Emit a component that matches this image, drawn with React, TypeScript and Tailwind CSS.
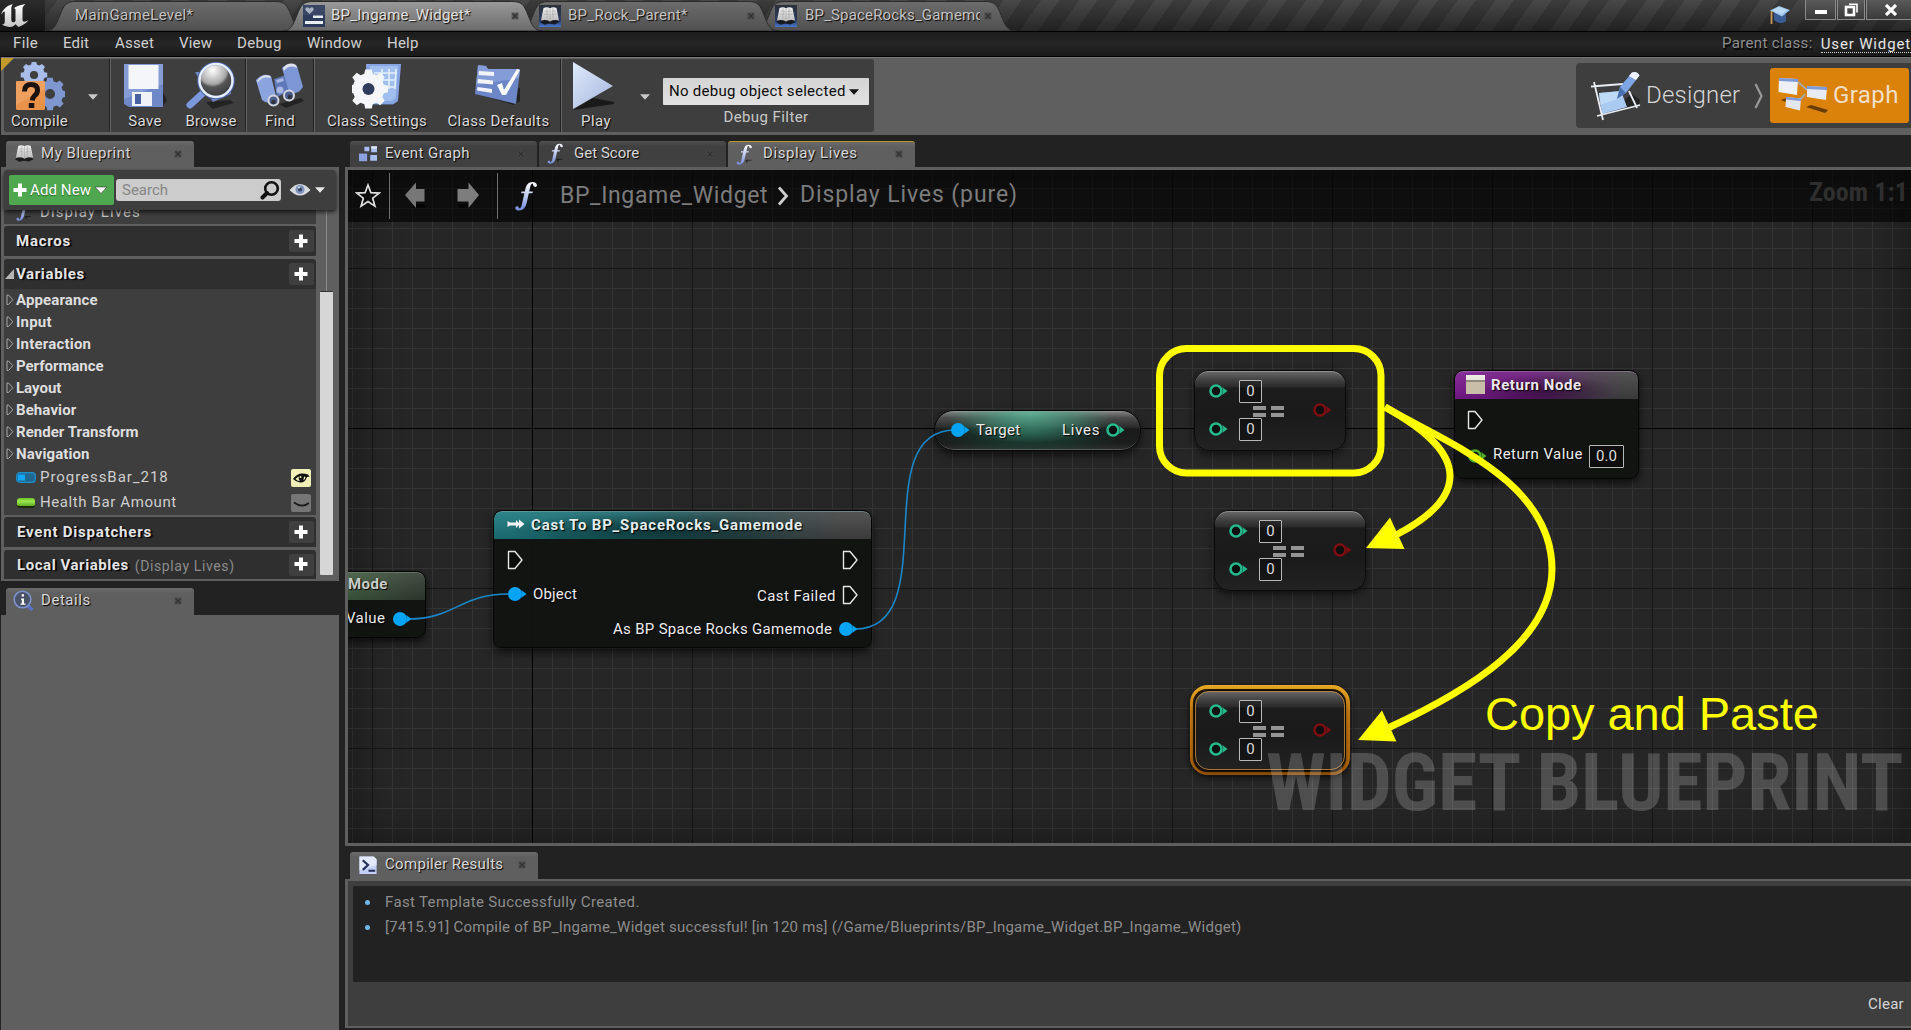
import React from "react";

type Kids = { children?: React.ReactNode };

const SHADOW = "[text-shadow:1px_1px_1px_#000]";

/* ---------- small shared icons ---------- */

function Close({ className = "" }: { className?: string }) {
  return (
    <svg viewBox="0 0 8 8" className={`h-2 w-2 ${className}`}>
      <rect x="0.5" y="0.5" width="7" height="7" fill="#484848" opacity="0.7" />
      <path d="M1.5 1.5l5 5M6.5 1.5l-5 5" stroke="#2e2e2e" strokeWidth="1.2" opacity="0.9" />
    </svg>
  );
}

function Caret({ color = "#c9c9c9", className = "" }: { color?: string; className?: string }) {
  return (
    <svg viewBox="0 0 10 6" className={`h-1.5 w-2.5 ${className}`}>
      <path d="M0 0.3h10L5 5.7z" fill={color} />
    </svg>
  );
}

function Plus({ className = "" }: { className?: string }) {
  return (
    <svg viewBox="0 0 14 14" className={className}>
      <path d="M5 0.5h4V5h4.5v4H9v4.5H5V9H0.500V5H5z" fill="#fff" />
    </svg>
  );
}

function FnIcon({ className = "" }: { className?: string }) {
  return (
    <svg viewBox="0 0 24 30" className={className}>
      <defs>
        <linearGradient id="fn" x1="0" y1="0" x2="0" y2="1">
          <stop offset="0" stopColor="#ffffff" />
          <stop offset="0.45" stopColor="#c3cef2" />
          <stop offset="1" stopColor="#7088da" />
        </linearGradient>
      </defs>
      <path d="M13 22.500h9v1.500h-5l-2 4z" fill="#0d0d0d" opacity="0.6" />
      <path
        d="M22.500 4.500C22.500 2.300 20.500 1 18 1C14 1 11.800 3.800 10.800 8.300L10.300 10.500H7L6.600 12.300H9.900L7.600 22.500C7 25.300 6.300 27.300 4.800 27.300C4.300 27.300 4.500 26.300 3.500 25.500C2.300 24.700 0.600 25.500 0.800 27.200C1 28.700 2.500 29.500 4.300 29.500C8.800 29.500 11.300 26 12.400 21L14.300 12.300H18L18.400 10.500H14.700L15.700 6C16.200 3.800 16.900 2.600 18 2.600C18.800 2.600 18.400 3.600 18.800 4.600C19.500 6.500 22.500 6.300 22.500 4.500z"
        fill="url(#fn)"
      />
    </svg>
  );
}

function Book({ framed = false, className = "" }: { framed?: boolean; className?: string }) {
  return (
    <svg viewBox="0 0 22 22" className={className}>
      <defs>
        <linearGradient id="bkframe" x1="0" y1="0" x2="0" y2="1">
          <stop offset="0" stopColor="#2b3039" />
          <stop offset="0.7" stopColor="#2a3c63" />
          <stop offset="1" stopColor="#4a78d0" />
        </linearGradient>
        <linearGradient id="bkpage" x1="0" y1="0" x2="0" y2="1">
          <stop offset="0" stopColor="#f2f2f2" />
          <stop offset="1" stopColor="#b9b9b9" />
        </linearGradient>
      </defs>
      {framed && <rect width="22" height="22" fill="url(#bkframe)" />}
      <path d="M1 17l3-2h14l2.500 2-5 2.500-5-1-5 1.200z" fill="#111" opacity="0.85" />
      <path d="M4.500 3Q8 1.500 11 3.200Q14 1.500 17.500 3L20 15.500Q15 14.200 11 16.500Q7 14.200 2 15.500z" fill="url(#bkpage)" />
      <path d="M11 3.200V16.500M5.500 6.500q3-1 4.500 0M5 9.500q3-1 5 0M12.500 6.500q2-1 4.500 0M12.500 9.500q3-1 5 0M8 3v10M14 3v10" stroke="#9a9a9a" strokeWidth="0.500" fill="none" />
    </svg>
  );
}

const GEAR =
  "M-2.200 -10h4.400l.6 2.800 2.500 1 2.500-1.600 3 3-1.600 2.500 1 2.500 2.800.6v4.400l-2.800.6-1 2.500 1.600 2.500-3 3-2.500-1.600-2.500 1-.6 2.800h-4.400l-.6-2.800-2.500-1-2.500 1.600-3-3 1.600-2.500-1-2.500-2.800-.6v-4.400l2.800-.6 1-2.500-1.600-2.500 3-3 2.500 1.600 2.500-1z";

function Gear({ x, y, s, fill, hole }: { x: number; y: number; s: number; fill: string; hole: string }) {
  return (
    <g transform={`translate(${x} ${y}) scale(${s})`}>
      <path transform="translate(0 -3)" d={GEAR} fill={fill} />
      <circle r="4" fill={hole} />
    </g>
  );
}

/* ---------- title bar ---------- */

function UnrealLogo() {
  return (
    <svg viewBox="0 0 30 30" className="h-[30px] w-[30px]">
      <defs>
        <linearGradient id="ulogo" x1="0" y1="0" x2="0" y2="1">
          <stop offset="0" stopColor="#ffffff" />
          <stop offset="1" stopColor="#c4c4c4" />
        </linearGradient>
      </defs>
      <path
        d="M1 14.500C3 9 7 5.500 13 4.300C11.500 5.700 11.300 7 11.300 9V19.500C11.300 21.500 12.300 22.300 13.300 22.300C14.300 22.300 15 21.800 15.500 20.800V10C15.500 8.800 15 8.300 14 8.200C16 6.300 18.500 5.600 25.500 4C23 6 22.500 7.300 22.500 9.500V19.500C22.500 21.800 24 22.500 28.500 20.300C26 23.500 22.500 25.800 18.500 27L15.500 24.200C13.500 26.500 11.500 27 9.300 26.900C5.800 26.600 4.200 25.800 2 24.500C4.300 24.500 4.800 23.200 4.800 21V12.500C4.800 10.500 3.800 11.200 1 14.500z"
        fill="url(#ulogo)"
      />
    </svg>
  );
}

function TabShape({ w, active }: { w: number; active?: boolean }) {
  const d = `M0 31C9 31 11 25 15 15C19 5 21 1.500 31 1.500H${w - 31}C${w - 21} 1.500 ${w - 19} 5 ${w - 15} 15C${w - 11} 25 ${w - 9} 31 ${w} 31z`;
  return (
    <svg viewBox={`0 0 ${w} 31`} preserveAspectRatio="none" className="absolute inset-0 h-full w-full">
      <defs>
        <linearGradient id="tabOn" x1="0" y1="0" x2="0" y2="1">
          <stop offset="0" stopColor="#9a9a9a" />
          <stop offset="1" stopColor="#6b6b6b" />
        </linearGradient>
        <linearGradient id="tabOff" x1="0" y1="0" x2="0" y2="1">
          <stop offset="0" stopColor="#6c6c6c" />
          <stop offset="1" stopColor="#505050" />
        </linearGradient>
      </defs>
      <path d={d} fill={active ? "url(#tabOn)" : "url(#tabOff)"} stroke="#2b2b2b" strokeWidth="1" />
    </svg>
  );
}

function TitleBar() {
  return (
    <header className="flex h-[31px] shrink-0 justify-between bg-[linear-gradient(to_bottom,rgba(0,0,0,0)_0%,rgba(0,0,0,0.45)_100%),repeating-linear-gradient(125deg,#3c3c3c_0px,#3c3c3c_16px,#484848_16px,#484848_31px)]">
      <div className="flex">
        <div className="w-[45px] bg-[linear-gradient(to_bottom,#2c2c2c,#151515)]">
          <UnrealLogo />
        </div>
        <div className="relative w-[261px] pl-[30px]">
          <TabShape w={261} />
          <span className={`relative text-[15px] leading-[31px] tracking-[0.32px] text-[#c4c4c4] ${SHADOW}`}>MainGameLevel*</span>
        </div>
        <div className="relative z-10 -ml-[24px] flex w-[261px] items-center pl-[21px]">
          <TabShape w={261} active />
          <svg viewBox="0 0 22 22" className="relative h-[22px] w-[22px]">
            <rect width="22" height="22" fill="#2c3a5c" />
            <rect width="22" height="10" fill="#3a4764" />
            <path d="M6.500 9L2.500 5.200Q2 2.500 4.300 2.300Q6 2.300 6.500 3.800Q7.200 2.300 8.800 2.300Q11 2.600 10.500 5.200z" fill="#a9b3c4" />
            <path d="M10 10.500h10v2.500H10zM2 16h18v3H2z" fill="#e8ecf5" />
          </svg>
          <span className={`relative ml-[6px] w-[180px] text-[15px] leading-[31px] tracking-[0.24px] text-[#e2e2e2] ${SHADOW}`}>BP_Ingame_Widget*</span>
          <Close className="relative" />
        </div>
        <div className="relative z-[5] -ml-[25px] flex w-[261px] items-center pl-[21px]">
          <TabShape w={261} />
          <Book framed className="relative h-[22px] w-[22px]" />
          <span className={`relative ml-[7px] w-[179px] text-[15px] leading-[31px] tracking-[0.27px] text-[#c4c4c4] ${SHADOW}`}>BP_Rock_Parent*</span>
          <Close className="relative" />
        </div>
        <div className="relative -ml-[25px] flex w-[262px] items-center pl-[21px]">
          <TabShape w={262} />
          <Book framed className="relative h-[22px] w-[22px]" />
          <span className={`relative ml-[8px] w-[175px] overflow-hidden whitespace-nowrap text-[15px] leading-[31px] tracking-[0.16px] text-[#c4c4c4] ${SHADOW}`}>BP_SpaceRocks_Gamemode</span>
          <Close className="relative ml-[4px]" />
        </div>
      </div>
      <div className="flex">
        <svg viewBox="0 0 22 22" className="mr-[14px] mt-1 h-[22px] w-[22px]">
          <path d="M5 9v7q6 6 12 1v-7z" fill="#3a5c92" />
          <path d="M1 6.500L10 2l11 4-8 6.500z" fill="#9cc3ea" />
          <path d="M3 6.500L10 3l8 3-5.500 4.500z" fill="#bcd9f5" />
          <path d="M2.500 7v13" stroke="#c59a5c" strokeWidth="1.800" />
        </svg>
        <div className="flex h-5 w-[31px] items-center justify-center border border-t-0 border-[#8b8b8b] bg-[linear-gradient(to_bottom,#5a5a5a,#3a3a3a)]">
          <div className="mt-1 h-1 w-3 bg-white" />
        </div>
        <div className="ml-px flex h-5 w-[28px] items-center justify-center border border-t-0 border-[#8b8b8b] bg-[linear-gradient(to_bottom,#5a5a5a,#3a3a3a)]">
          <svg viewBox="0 0 14 14" className="h-3.5 w-3.5">
            <path d="M5 1.200h8v8.300" fill="none" stroke="#fff" strokeWidth="1.600" />
            <rect x="2" y="4" width="8" height="8" fill="none" stroke="#fff" strokeWidth="2.600" />
          </svg>
        </div>
        <div className="ml-px flex h-5 w-[45px] items-center justify-center border border-r-0 border-t-0 border-[#8b8b8b] bg-[linear-gradient(to_bottom,#5a5a5a,#3a3a3a)]">
          <svg viewBox="0 0 12 12" className="ml-1 h-3 w-3">
            <path d="M1 1l10 10M11 1L1 11" stroke="#fff" strokeWidth="3.200" />
          </svg>
        </div>
      </div>
    </header>
  );
}

function MenuBar() {
  const item = "text-[15px] leading-[22px] text-[#d0d0d0]";
  return (
    <nav className="relative flex h-[26px] shrink-0 items-start border-y border-black bg-[linear-gradient(to_bottom,#1c1c1c,#262626_50%,#191919)] pl-[13px]">
      <span className={`w-[50px] tracking-[0.4px] ${item}`}>File</span>
      <span className={`w-[52px] tracking-[0.2px] ${item}`}>Edit</span>
      <span className={`w-[64px] tracking-[0.19px] ${item}`}>Asset</span>
      <span className={`w-[58px] tracking-[0.2px] ${item}`}>View</span>
      <span className={`w-[70px] tracking-[0.38px] ${item}`}>Debug</span>
      <span className={`w-[80px] tracking-[0.25px] ${item}`}>Window</span>
      <span className={`tracking-[0.23px] ${item}`}>Help</span>
      <div className="ml-auto flex whitespace-nowrap">
        <span className="mr-[8px] text-[15px] leading-[22px] tracking-[0.36px] text-[#8f8f8f] [text-shadow:1px_2px_1px_#000]">Parent class:</span>
        <span className="mt-0.5 h-[19px] border-b border-dotted border-[#cfcfcf] text-[15px] leading-[20px] tracking-[0.85px] text-[#e4e4e4]">User Widget</span>
      </div>
    </nav>
  );
}

/* ---------- toolbar ---------- */

function Sep() {
  return <div className="mx-px h-full w-[2px] border-l border-[#222] bg-[#636363]" />;
}

function Tool({ children, label, className = "" }: Kids & { label: string; className?: string }) {
  return (
    <div className={`flex flex-col items-center pt-[3px] ${className}`}>
      <div className="h-[50px]">{children}</div>
      <span className={`whitespace-nowrap text-[15px] leading-[18px] text-[#dadada] ${SHADOW}`}>{label}</span>
    </div>
  );
}

const big = "h-[50px] w-[50px]";

function CompileIcon() {
  return (
    <svg viewBox="0 0 50 50" className={big}>
      <Gear x={19} y={13} s={1.02} fill="#a9bdea" hole="#3e3e3e" />
      <Gear x={35} y={32} s={1.25} fill="#7f97cf" hole="#3e3e3e" />
      <rect x="1" y="19" width="29" height="29" rx="1.500" fill="#e8924a" />
      <path d="M1 19h29v8L1 43z" fill="#f2aa6c" opacity="0.6" />
      <path d="M9.500 29.500Q9.500 22.500 16 22.500Q22.500 22.500 22.500 28.200Q22.500 31.500 19.500 33.800Q17.500 35.500 17.300 38.500" fill="none" stroke="#1c1310" strokeWidth="5" />
      <rect x="13.800" y="41" width="5.500" height="5" fill="#1c1310" />
    </svg>
  );
}

function SaveIcon() {
  return (
    <svg viewBox="0 0 50 50" className={big}>
      <path d="M8 44.500h34l5-6-4-8z" fill="#1c1c1c" opacity="0.8" />
      <path d="M4 2h39v43H9l-5-3z" fill="#6e88c8" />
      <path d="M4 2h39v20L4 37z" fill="#8ea5dc" opacity="0.7" />
      <rect x="8.500" y="3" width="30" height="24" fill="#f4f6fa" />
      <rect x="12" y="30" width="20" height="14" fill="#f0f2f8" />
      <rect x="15" y="32" width="6" height="10" fill="#48629f" />
    </svg>
  );
}

function BrowseIcon() {
  return (
    <svg viewBox="0 0 50 50" className={big}>
      <defs>
        <radialGradient id="lens" cx="0.4" cy="0.2" r="0.9">
          <stop offset="0" stopColor="#ffffff" />
          <stop offset="0.45" stopColor="#a8a8a8" />
          <stop offset="0.55" stopColor="#555" />
          <stop offset="1" stopColor="#333" />
        </radialGradient>
      </defs>
      <path d="M20 40l24-2 4 3-22 6z" fill="#1d1d1d" opacity="0.8" />
      <path d="M9 10l36 0v22l-18 8z" fill="#6f88c4" />
      <path d="M16 32L4 43" stroke="#7b98dc" strokeWidth="7" strokeLinecap="round" />
      <circle cx="30" cy="18.500" r="17" fill="url(#lens)" stroke="#4a64a4" strokeWidth="3.500" />
      <circle cx="30" cy="18.500" r="16.500" fill="none" stroke="#e6edfb" strokeWidth="2.500" />
    </svg>
  );
}

function FindIcon() {
  return (
    <svg viewBox="0 0 50 50" className={big}>
      <path d="M24 42l22-6 3 3-18 7z" fill="#1c1c1c" opacity="0.8" />
      <path d="M19 17l12-4 4 16-13 6z" fill="#6078b8" />
      <path d="M1 18Q8 10 16 14L22 38Q14 44 7 38z" fill="#8ba3de" />
      <path d="M2 19Q8 11 15 14l.5 2Q8 13 2.500 20.500z" fill="#e4e6ea" />
      <path d="M27 6Q34 -1 42 4L48 25Q42 34 34 30z" fill="#7d97d6" />
      <path d="M28 6Q34 -1 41 3l1 3Q34 2 29 9z" fill="#dfe2e8" />
      <circle cx="18.500" cy="38.500" r="5" fill="#4c5f91" stroke="#d4d7de" strokeWidth="2" />
      <circle cx="18.500" cy="40" r="2.300" fill="#30333d" />
      <circle cx="34" cy="33.500" r="5" fill="#4c5f91" stroke="#d4d7de" strokeWidth="2" />
      <circle cx="35" cy="35" r="2.300" fill="#30333d" />
      <circle cx="25" cy="28" r="3.500" fill="#a7b8e3" />
      <path d="M21 18l7-2 1 3-7 2z" fill="#a7b8e3" />
    </svg>
  );
}

function ClassSettingsIcon() {
  return (
    <svg viewBox="0 0 50 50" className={big}>
      <path d="M16 43h24l8-6z" fill="#1c1c1c" opacity="0.8" />
      <path d="M14 2h35l-3 37-5 3.500H15z" fill="#86a5e2" />
      <path d="M18 4h28l-2.500 32-4 3H18z" fill="#a6c5f2" opacity="0.8" />
      <path d="M30 7v20M37 7v20M44 7l-1 20M22 11h23M24 18h20M28 25h15" stroke="#e4effc" strokeWidth="1.600" />
      <Gear x={16.500} y={27} s={1.5} fill="#f4f6fa" hole="#2f3c5e" />
    </svg>
  );
}

function ClassDefaultsIcon() {
  return (
    <svg viewBox="0 0 50 50" className={big}>
      <path d="M6 33l34 10 6-4V26z" fill="#1c1c1c" opacity="0.8" />
      <path d="M4 3l8 1 2 3h31l1 1-4 34L1 32z" fill="#6c86c8" />
      <path d="M4 3l8 1 2 3h31l1 1-1 8L2 23z" fill="#8fa7de" opacity="0.7" />
      <path d="M5 9l15 1v4L4.500 13zM4 17l15 1.500v4L3.500 21zM3.500 25l14.500 2v4L3 28.500z" fill="#f2f4f8" />
      <path d="M23 23l5-2 2 7L43 7l3 1L32 33h-4z" fill="#fafbfd" />
    </svg>
  );
}

function PlayIcon() {
  return (
    <svg viewBox="0 0 50 50" className={big}>
      <defs>
        <linearGradient id="play" x1="0" y1="0" x2="1" y2="1">
          <stop offset="0" stopColor="#dfe9fb" />
          <stop offset="0.6" stopColor="#bccbe9" />
          <stop offset="1" stopColor="#a5b8dd" />
        </linearGradient>
      </defs>
      <path d="M2 48L22 36 43 40V42z" fill="#1a1a1a" />
      <path d="M2 0L42 24L2 47z" fill="url(#play)" />
    </svg>
  );
}

function Toolbar() {
  return (
    <div className="relative ml-px flex h-[78px] shrink-0 justify-between border-t border-[#777] bg-[#5f5f5f] pt-px">
      <svg viewBox="0 0 13 13" className="absolute left-0 top-0 z-10 h-[13px] w-[13px]">
        <path d="M0 0h13L0 13z" fill="#c39a2c" />
      </svg>
      <div className="ml-[3px] flex h-[73px] w-[870px] rounded-[3px] bg-[#3e3e3e]">
        <Tool label="Compile" className="w-[71px] tracking-[0.3px]"><CompileIcon /></Tool>
        <div className="flex w-[33px] justify-center pt-[35px]"><Caret className="ml-[3px]" /></div>
        <Sep />
        <Tool label="Save" className="w-[66px] tracking-[0.3px]"><SaveIcon /></Tool>
        <Tool label="Browse" className="w-[66px] tracking-[0.23px]"><BrowseIcon /></Tool>
        <Sep />
        <Tool label="Find" className="w-[64px] tracking-[0.3px]"><FindIcon /></Tool>
        <Sep />
        <Tool label="Class Settings" className="w-[122px] tracking-[0.32px]"><ClassSettingsIcon /></Tool>
        <Tool label="Class Defaults" className="w-[121px] tracking-[0.4px]"><ClassDefaultsIcon /></Tool>
        <Sep />
        <Tool label="Play" className="w-[66px] tracking-[0.4px]"><PlayIcon /></Tool>
        <div className="flex w-[32px] justify-center pt-[35px]"><Caret /></div>
        <div className="ml-[2px] flex flex-col items-center pt-[19px]">
          <div className="flex h-[27px] w-[206px] items-center rounded-[1px] bg-[linear-gradient(to_bottom,#d4d4d4,#e2e2e2)] pl-[6px]">
            <span className="w-[180px] whitespace-nowrap text-[15px] leading-[27px] tracking-[0.29px] text-[#0c0c0c]">No debug object selected</span>
            <Caret color="#111" />
          </div>
          <span className="mt-[2px] text-[15px] leading-[20px] tracking-[0.42px] text-[#c8c8c8]">Debug Filter</span>
        </div>
      </div>
      <div className="mt-1 flex h-[65px] w-[335px] items-center rounded-l-[4px] bg-[#3e3e3e] pl-[15px]">
        <svg viewBox="0 0 50 50" className="h-[50px] w-[50px]">
          <path d="M14 44l34-11 1-4-8-6z" fill="#1d1d1d" opacity="0.8" />
          <path d="M8 22l22-2 6 16-25 7z" fill="#a9cbf2" />
          <path d="M8 22l22-2 2 6-23 8z" fill="#c9e0fa" opacity="0.7" />
          <path d="M3 11l9 38M0 15.500l32-2.500M38 20l8 17M6 45l43-11" stroke="#e9edf3" strokeWidth="1.800" fill="none" />
          <path d="M26 28l3-12L41 1.500q5-2 7.500 3L35 22z" fill="#7fa6e4" />
          <path d="M41 1.500q5-2 7.500 3L45 9l-7-4z" fill="#f0f4fb" />
          <path d="M26 28l3-12 6 6z" fill="#4a6fae" />
        </svg>
        <span className="mb-[2px] ml-[5px] text-[24px] font-light leading-[30px] tracking-[0.2px] text-[#d6d6d6]">Designer</span>
        <svg viewBox="0 0 10 26" className="ml-[14px] h-[26px] w-[10px]">
          <path d="M1.500 1l6 12-6 12" fill="none" stroke="#9a9a9a" strokeWidth="2.200" />
        </svg>
        <div className="ml-auto mr-[2px] flex h-[55px] w-[139px] items-center rounded-[3px] bg-[#db820a] pl-[8px]">
          <svg viewBox="0 0 50 40" className="h-[40px] w-[50px]">
            <path d="M3 24l8-3 8 5-4 3zM28 31l5-2 17 5-3 3z" fill="#5a3503" opacity="0.9" />
            <path d="M20 6l9 8M20 26l7-8" stroke="#a5a9a6" strokeWidth="2" />
            <path d="M1 2l19 1-1 16L0.500 16z" fill="#eef0f6" />
            <path d="M1 2l19 1v3L1 5z" fill="#7f9ad6" />
            <path d="M29 10l20 1-1 13-19-3z" fill="#e9ebf3" />
            <path d="M29 10l20 1v3l-20-1z" fill="#7f9ad6" />
            <path d="M8 21l15 1.500-1 12L7.500 31z" fill="#e4e6ee" />
            <path d="M8 21l15 1.500v2.500L8 23.500z" fill="#7f9ad6" />
          </svg>
          <span className="mb-[2px] ml-[5px] text-[24px] leading-[30px] tracking-[0.4px] text-[#f1dfc6]">Graph</span>
        </div>
      </div>
    </div>
  );
}

/* ---------- dock tabs ---------- */

function DockTab({ icon, label, className = "", textClass = "", active = true }: { icon: React.ReactNode; label: string; className?: string; textClass?: string; active?: boolean }) {
  return (
    <div className={`flex items-center rounded-t-[3px] pb-px pr-[12px] ${active ? "bg-[linear-gradient(to_bottom,#6a6a6a,#5f5f5f_20%)]" : "bg-[linear-gradient(to_bottom,#505050,#404040_20%)]"} ${className}`}>
      {icon}
      <span className={`flex-1 whitespace-nowrap pb-px text-[15px] leading-[23px] text-[#d8d8d8] ${SHADOW} ${textClass}`}>{label}</span>
      <Close />
    </div>
  );
}

/* ---------- left column ---------- */

function SectionHead({ children, className = "" }: Kids & { className?: string }) {
  return (
    <div className={`flex shrink-0 items-center rounded-t-[3px] bg-[#2f2f2f] pr-[2px] ${className}`}>
      {children}
      <div className="ml-auto flex h-[22px] w-[25px] items-center justify-center rounded-[2px] bg-[#3f3f3f] pb-px pr-px">
        <Plus className="h-[14px] w-[14px]" />
      </div>
    </div>
  );
}

const head = `text-[15px] font-bold leading-[20px] text-[#e4e4e4] [text-shadow:2px_1px_1px_#000]`;

const CATEGORIES: [string, string][] = [
  ["Appearance", "tracking-[0.13px]"],
  ["Input", "tracking-[0.2px]"],
  ["Interaction", "tracking-[0.2px]"],
  ["Performance", "tracking-[-0.04px]"],
  ["Layout", "tracking-[0px]"],
  ["Behavior", "tracking-[0.1px]"],
  ["Render Transform", "tracking-[0.04px]"],
  ["Navigation", "tracking-[0.1px]"],
];

function MyBlueprint() {
  return (
    <section className="flex h-[440px] w-[338px] flex-col">
      <DockTab
        className="ml-[5px] h-[26px] w-[188px] shrink-0"
        icon={<Book className="ml-[8px] mr-[6px] h-[21px] w-[21px]" />}
        label="My Blueprint"
        textClass="tracking-[0.55px]"
      />
      <div className="flex min-h-0 flex-1 flex-col bg-[#5f5f5f] px-[3px] pt-[3px]">
        <div className="relative z-10 flex h-[40px] shrink-0 items-center rounded-[4px] bg-[#3e3e3e] pl-[5px] shadow-[0_2px_4px_rgba(0,0,0,0.7)]">
          <div className="flex h-[30px] w-[105px] items-center rounded-[2px] bg-[#4fa850] pl-[4px]">
            <Plus className="h-[14px] w-[14px]" />
            <span className="ml-[3px] w-[65px] whitespace-nowrap text-[15px] leading-[24px] tracking-[0.1px] text-white [text-shadow:0_1px_1px_#2a6a2a]">Add New</span>
            <svg viewBox="0 0 12 8" className="h-2 w-3"><path d="M0 1h12L6 7.500z" fill="#fff" stroke="#222" strokeWidth="0.5" /></svg>
          </div>
          <div className="ml-[2px] flex h-[22px] w-[165px] items-center rounded-[3px] bg-[#cccccc] pl-[6px]">
            <span className="text-[15px] leading-[22px] text-[#858585]">Search</span>
            <svg viewBox="0 0 20 20" className="ml-auto mr-px h-5 w-5">
              <circle cx="11.500" cy="8.500" r="6.300" fill="none" stroke="#111" strokeWidth="2.600" />
              <path d="M7 13l-4.500 4.500" stroke="#111" strokeWidth="4" strokeLinecap="round" />
            </svg>
          </div>
          <svg viewBox="0 0 22 14" className="ml-[8px] h-[14px] w-[22px]">
            <path d="M0.500 7Q11 -5 21.500 7Q11 18 0.500 7z" fill="#d9dbe0" />
            <circle cx="11" cy="6.500" r="4.600" fill="#7f93bb" />
            <circle cx="11" cy="6.500" r="2" fill="#33415f" />
            <circle cx="10" cy="4.500" r="1" fill="#e8ecf5" />
          </svg>
          <Caret color="#e8e8e8" className="ml-[4px]" />
        </div>
        <div className="flex min-h-0 flex-1">
          <div className="flex w-[312px] flex-col">
            <div className="flex h-[14px] shrink-0 items-end overflow-hidden bg-[#3e3e3e] pl-[12px]">
              <FnIcon className="mb-[3px] h-[20px] w-[16px] shrink-0" />
              <span className="ml-[8px] text-[15px] leading-[24px] tracking-[1.08px] text-[#c0c0c0]">Display Lives</span>
            </div>
            <SectionHead className="mt-[2px] h-[30px]">
              <span className={`ml-[12px] tracking-[0.76px] ${head}`}>Macros</span>
            </SectionHead>
            <SectionHead className="mt-[3px] h-[30px]">
              <svg viewBox="0 0 9 10" className="mb-px ml-px h-[10px] w-[9px]"><path d="M9 0v10H0z" fill="#b5b5b5" /></svg>
              <span className={`mb-px ml-[2px] tracking-[0.63px] ${head}`}>Variables</span>
            </SectionHead>
            <div className="flex h-[226px] shrink-0 flex-col bg-[#3e3e3e]">
              {CATEGORIES.map(([name, track]) => (
                <div key={name} className="flex h-[22px] shrink-0 items-center pl-[2px]">
                  <svg viewBox="0 0 8 12" className="mb-px h-[12px] w-[8px]"><path d="M1 1v9.500h1.500L6.800 5.700 2.500 1z" fill="none" stroke="#a8a8a8" strokeWidth="1" /></svg>
                  <span className={`ml-[2px] text-[15px] font-bold leading-[22px] text-[#dedede] ${track}`}>{name}</span>
                </div>
              ))}
              <div className="flex h-[25px] shrink-0 items-center pl-[12px] pr-[5px]">
                <svg viewBox="0 0 20 11" className="h-[11px] w-[20px]">
                  <rect x="0.700" y="0.700" width="18.600" height="9.600" rx="3" fill="#20688f" stroke="#1e90cf" strokeWidth="1.200" />
                  <rect x="2" y="2.500" width="7" height="6" fill="#12a5f5" />
                </svg>
                <span className="ml-[4px] text-[15px] leading-[25px] tracking-[0.95px] text-[#cfcfcf]">ProgressBar_218</span>
                <div className="ml-auto flex h-[18px] w-[20px] items-center justify-center rounded-[2px] bg-[#f1efb8]">
                  <svg viewBox="0 0 18 14" className="h-[14px] w-[18px]">
                    <path d="M1 8Q6 0 16 3.500Q17 4.500 17.500 6Q16 5.500 15 6Q13 12 8 11.500Q4 11 1 8z" fill="#111" />
                    <path d="M3.500 8Q5 6 7 5.500Q5.800 8 8 10Q5 9.800 3.500 8zM13.500 6Q13.500 8.500 11 9.500Q12 7.500 12 5.500z" fill="#f1efb8" />
                    <circle cx="8.500" cy="6" r="1" fill="#f1efb8" />
                  </svg>
                </div>
              </div>
              <div className="flex h-[25px] shrink-0 items-center pl-[13px] pr-[5px]">
                <div className="h-[10px] w-[18px] rounded-[3px] border-b-2 border-[#1a2c0c] bg-[linear-gradient(to_bottom,#6cc32a,#9be84e_40%,#5fae22)]" />
                <span className="ml-[5px] text-[15px] leading-[25px] tracking-[0.6px] text-[#cfcfcf]">Health Bar Amount</span>
                <div className="ml-auto flex h-[18px] w-[20px] items-center justify-center rounded-[2px] bg-[#767676]">
                  <svg viewBox="0 0 18 14" className="h-[14px] w-[18px]"><path d="M2 6.500Q10 12.500 17 7" fill="none" stroke="#1a1a1a" strokeWidth="1.600" /></svg>
                </div>
              </div>
            </div>
            <SectionHead className="mt-[2px] h-[30px]">
              <span className={`ml-[13px] tracking-[0.79px] ${head}`}>Event Dispatchers</span>
            </SectionHead>
            <SectionHead className="mt-[3px] h-[29px]">
              <span className={`ml-[13px] tracking-[0.56px] ${head}`}>Local Variables</span>
              <span className="ml-[6px] mt-[2px] text-[14px] leading-[20px] tracking-[0.62px] text-[#8b8b8b]">(Display Lives)</span>
            </SectionHead>
          </div>
          <div className="flex flex-1 flex-col items-center">
            <div className="h-[81px] w-px bg-[#8a8a8a]" />
            <div className="h-[284px] w-[13px] rounded-[1px] border-t border-[#333] bg-[#d6d6d6]" />
          </div>
        </div>
      </div>
    </section>
  );
}

function Details() {
  return (
    <section className="mt-[7px] flex flex-1 flex-col">
      <DockTab
        className="ml-[5px] h-[27px] w-[188px] shrink-0"
        icon={
          <svg viewBox="0 0 22 22" className="ml-[7px] mr-[6px] h-[22px] w-[22px]">
            <path d="M14 15l5.500 5" stroke="#5673c4" strokeWidth="3.500" />
            <circle cx="9.500" cy="9.500" r="8.300" fill="#4a5266" stroke="#7c93d0" strokeWidth="1.600" />
            <path d="M8 8.500h3v5h1.500v1.200h-5v-1.200h1.300V9.700H8zM8.700 4.300h2.300v2.300H8.700z" fill="#fff" />
          </svg>
        }
        label="Details"
        textClass="tracking-[0.55px]"
      />
      <div className="w-[338px] flex-1 bg-[#5f5f5f]" />
    </section>
  );
}

/* ---------- graph nodes ---------- */

function At({ x, y, children, className = "" }: Kids & { x: number; y: number; className?: string }) {
  return (
    <div className={`absolute whitespace-nowrap ${className}`} style={{ left: x, top: y }}>
      {children}
    </div>
  );
}

function ExecPin() {
  return (
    <svg viewBox="0 0 16 20" className="h-[20px] w-[16px]">
      <path d="M1.500 1.500h6.500L15 10 8 18.500h-6.500z" fill="rgba(0,0,0,0.35)" stroke="#e6e6e6" strokeWidth="1.400" strokeLinejoin="round" />
    </svg>
  );
}

function DataPin({ color, filled = false }: { color: string; filled?: boolean }) {
  return (
    <svg viewBox="0 0 20 16" className="h-[16px] w-[20px]">
      {filled ? <circle cx="8" cy="8" r="7" fill={color} /> : <circle cx="8" cy="8" r="5.500" fill="#0b0f0d" stroke={color} strokeWidth="2.600" />}
      <path d="M14.200 4L19.500 8l-5.300 4Q16 8 14.200 4z" fill={color} />
    </svg>
  );
}

function ValueBox({ children, className = "" }: Kids & { className?: string }) {
  return (
    <div className={`flex h-[23px] items-center justify-center rounded-[1px] border border-[#b9b9b9] bg-black/30 text-[15px] leading-[21px] text-[#dcdcdc] ${className}`}>
      {children}
    </div>
  );
}

const label = "text-[15px] leading-[20px] text-[#ececec] [text-shadow:1px_1px_1px_#000]";

const TEAL = "#25b98b";

function EqualNode({ x, y, selected = false }: { x: number; y: number; selected?: boolean }) {
  return (
    <At x={x} y={y}>
      {selected && (
        <div className="absolute -left-[4px] -top-[5px] h-[90px] w-[160px] rounded-[18px] bg-[linear-gradient(to_bottom,#efae25,#df8b14_30%,#c46c0c)] shadow-[0_2px_6px_rgba(0,0,0,0.6)]">
          <div className="ml-[3px] mt-[4px] h-[83px] w-[153px] rounded-[14px] bg-[#2a1a08]" />
        </div>
      )}
      <div className="relative h-[81px] w-[152px] rounded-[15px] border border-[#0b0b0b] bg-[linear-gradient(to_bottom,#6b6b6b_0px,#3c3c3c_10px,#2a2a2a_16px,#1c1c1c_17px,#1a1a1a_45px,#212221_80px)] shadow-[0_3px_8px_rgba(0,0,0,0.6)]">
        <div className={`absolute inset-0 rounded-[14px] border-t ${selected ? "border-x border-b border-[#c98a3a]/80" : "border-[#a0a0a0]/70"}`} />
        <div className="absolute left-[13px] top-[12px]"><DataPin color={TEAL} /></div>
        <div className="absolute left-[13px] top-[50px]"><DataPin color={TEAL} /></div>
        <ValueBox className="absolute left-[44px] top-[9px] w-[23px]">0</ValueBox>
        <ValueBox className="absolute left-[44px] top-[47px] w-[23px]">0</ValueBox>
        <div className="absolute left-[58px] top-[35px] grid grid-cols-2 gap-x-[5px] gap-y-[3px]">
          <i className="h-[4px] w-[13px] bg-[#949494]" />
          <i className="h-[4px] w-[13px] bg-[#949494]" />
          <i className="h-[4px] w-[13px] bg-[#949494]" />
          <i className="h-[4px] w-[13px] bg-[#949494]" />
        </div>
        <div className="absolute left-[117px] top-[31px]"><DataPin color="#7c0d10" /></div>
      </div>
    </At>
  );
}

const BODY = "rounded-[9px] border border-[#050505] bg-[#111311]/95 shadow-[0_4px_9px_rgba(0,0,0,0.65)] overflow-hidden";

function Graph() {
  return (
    <div className="relative min-h-0 flex-1 overflow-hidden bg-[#262626]">
      <div className="absolute -left-[348px] -top-[170px] h-[1030px] w-[1911px]">
        <svg viewBox="0 0 1911 1030" className="absolute inset-0 h-full w-full">
          <defs>
            <pattern id="minor" x="12" y="8" width="20" height="20" patternUnits="userSpaceOnUse">
              <path d="M0.500 0V20M0 0.500H20" stroke="#353535" strokeWidth="1" />
            </pattern>
            <pattern id="major" x="52" y="108" width="160" height="160" patternUnits="userSpaceOnUse">
              <path d="M0.500 0V160M0 0.500H160" stroke="#161616" strokeWidth="1" />
            </pattern>
          </defs>
          <rect x="348" y="170" width="1563" height="673" fill="url(#minor)" />
          <rect x="348" y="170" width="1563" height="673" fill="url(#major)" />
          <path d="M532.500 170V843M348 428.500H1911" stroke="#000" strokeWidth="1" />
        </svg>
        <div className="absolute left-[348px] top-[170px] h-[673px] w-[1563px] shadow-[inset_0_0_50px_rgba(0,0,0,0.42)]" />

        <At x={240} y={571} className={`h-[67px] w-[186px] ${BODY}`}>
          <div className="h-[28px] rounded-tr-[8px] border-t border-[#8a9a88]/60 bg-[linear-gradient(to_bottom,rgba(255,255,255,0.08),rgba(0,0,0,0.15)),linear-gradient(to_right,#4a6b4a,#3f5a3f_60%,#333d33)]" />
        </At>
        <At x={493} y={510} className={`h-[138px] w-[379px] ${BODY}`}>
          <div className="h-[28px] rounded-t-[8px] border-t border-[#8fb0b2]/60 bg-[radial-gradient(ellipse_150px_18px_at_165px_18px,rgba(0,25,25,0.6),rgba(0,0,0,0)),linear-gradient(to_bottom,rgba(255,255,255,0.08),rgba(0,0,0,0.15)),linear-gradient(to_right,#1b7a80,#1d6a6f_35%,#2c4a4c_65%,#454545_92%)]" />
        </At>
        <At x={1454} y={370} className={`h-[109px] w-[185px] ${BODY}`}>
          <div className="h-[28px] rounded-t-[8px] border-t border-[#b18abb]/60 bg-[radial-gradient(ellipse_70px_16px_at_90px_18px,rgba(20,0,25,0.5),rgba(0,0,0,0)),linear-gradient(to_bottom,rgba(255,255,255,0.08),rgba(0,0,0,0.15)),linear-gradient(to_right,#7f1b93,#6c1a7d_40%,#4a3a4f_75%,#444_92%)]" />
        </At>
        <At x={934} y={410} className="h-[41px] w-[207px] overflow-hidden rounded-[20px] border border-[#070707] bg-[radial-gradient(ellipse_85px_30px_at_95px_2px,rgba(98,196,164,0.75),rgba(30,110,85,0)),radial-gradient(ellipse_95px_30px_at_95px_20px,rgba(24,84,66,0.75),rgba(0,0,0,0)),linear-gradient(to_bottom,#858585_0px,#4a4a4a_7px,#2c2c2c_16px,#1a1a1a_18px,#1b1d1c_32px,#303231_40px)] shadow-[0_4px_8px_rgba(0,0,0,0.6)]">
          <div className="h-full rounded-[19px] border border-x-0 border-[#9c9c9c]/40" />
        </At>

        <svg viewBox="0 0 1911 1030" className="absolute inset-0 h-full w-full" fill="none">
          <path d="M408 619C455 619 460 594 508 594M855 629C945 629 865 430 955 430" stroke="#1b87c9" strokeWidth="1.600" />
        </svg>

        <At x={348} y={574} className={`text-[15px] font-bold leading-[20px] tracking-[0.4px] text-[#c9cdc8] ${SHADOW}`}>Mode</At>
        <At x={346} y={608} className={`tracking-[0.4px] ${label}`}>Value</At>
        <At x={392} y={611}><DataPin color="#06a4f4" filled /></At>

        <At x={507} y={518}>
          <svg viewBox="0 0 18 12" className="h-[12px] w-[18px]">
            <path d="M0.500 3v6l2.500-1.500h6V10L12 7v3.500L17.500 6 12 1.500V5L9 2v2.500H3z" fill="#f2f2f2" />
          </svg>
        </At>
        <At x={531} y={515} className={`text-[15px] font-bold leading-[20px] tracking-[0.82px] text-[#e4eded] ${SHADOW}`}>Cast To BP_SpaceRocks_Gamemode</At>
        <At x={507} y={550}><ExecPin /></At>
        <At x={842} y={550}><ExecPin /></At>
        <At x={842} y={585}><ExecPin /></At>
        <At x={507} y={586}><DataPin color="#06a4f4" filled /></At>
        <At x={838} y={621}><DataPin color="#06a4f4" filled /></At>
        <At x={533} y={584} className={`tracking-[0.17px] ${label}`}>Object</At>
        <At x={757} y={586} className={`tracking-[0.43px] ${label}`}>Cast Failed</At>
        <At x={613} y={619} className={`tracking-[0.31px] ${label}`}>As BP Space Rocks Gamemode</At>

        <At x={950} y={422}><DataPin color="#06a4f4" filled /></At>
        <At x={976} y={420} className={`tracking-[0.34px] ${label}`}>Target</At>
        <At x={1062} y={420} className={`tracking-[0.7px] ${label}`}>Lives</At>
        <At x={1105} y={422}><DataPin color={TEAL} /></At>

        <EqualNode x={1194} y={370} />
        <EqualNode x={1214} y={510} />
        <EqualNode x={1194} y={690} selected />

        <At x={1466} y={375}>
          <div className="flex h-[19px] w-[19px] flex-col bg-[linear-gradient(to_bottom,#f0eee8,#cfc8b8)]">
            <div className="mt-[5px] h-[2px] bg-[#8f8a7d]" />
            <div className="flex-1 bg-[#c9bfa9]" />
          </div>
        </At>
        <At x={1491} y={375} className={`text-[15px] font-bold leading-[20px] tracking-[0.57px] text-[#ece6ee] ${SHADOW}`}>Return Node</At>
        <At x={1467} y={410}><ExecPin /></At>
        <At x={1467} y={448}><DataPin color="#4fb02c" /></At>
        <At x={1493} y={444} className={`tracking-[0.43px] ${label}`}>Return Value</At>
        <At x={1589} y={445}><ValueBox className="w-[35px]">0.0</ValueBox></At>

        <svg viewBox="0 0 1911 1030" className="absolute inset-0 h-full w-full" fill="none">
          <rect x="1159.500" y="348.500" width="221.500" height="124.500" rx="27" stroke="#ffff00" strokeWidth="7" />
          <path d="M1385 407C1422 428 1450 450 1450 476C1450 500 1425 520 1396 535" stroke="#ffff00" strokeWidth="7" />
          <path d="M1385 407C1440 440 1552 480 1552 569C1552 640 1470 690 1388 728" stroke="#ffff00" strokeWidth="7" />
          <path d="M1366 548l24-30.500 14.500 31.500zM1358 740l24-29.500 14.500 31z" fill="#ffff00" />
        </svg>
        <At x={1485} y={687} className="font-['Liberation_Sans'] text-[47px] leading-[54px] tracking-[-0.05px] text-[#ffff00]">Copy and Paste</At>
      </div>

      {/* breadcrumb strip over the canvas */}
      <div className="relative flex h-[52px] items-center bg-black/60 pl-[7px]">
        <svg viewBox="0 0 26 26" className="h-[26px] w-[26px]">
          <path d="M13 2l2.900 7.700 8.200.4-6.400 5.100 2.200 7.900-6.900-4.500-6.900 4.500 2.200-7.900-6.400-5.100 8.200-.4z" fill="none" stroke="#e0e0e0" strokeWidth="1.700" />
        </svg>
        <div className="ml-[8px] h-[46px] w-px bg-[#6f6f6f]" />
        <svg viewBox="0 0 22 28" className="ml-[14px] h-[28px] w-[22px]">
          <path d="M8 22h13v4H9z" fill="#000" opacity="0.6" />
          <path d="M1 13L12 0.500V7h8.500v12.500H12V26z" fill="#777" />
        </svg>
        <svg viewBox="0 0 22 28" className="ml-[31px] h-[28px] w-[22px]">
          <path d="M1 22h13v4H2z" fill="#000" opacity="0.6" />
          <path d="M22 13L11.500 0.500V7H0.500v12.500h11V26z" fill="#7d7d7d" />
        </svg>
        <div className="ml-[18px] h-[46px] w-px bg-[#6f6f6f]" />
        <FnIcon className="ml-[16px] h-[30px] w-[25px]" />
        <span className="ml-[21px] w-[217px] text-[23px] leading-[30px] tracking-[0.64px] text-[#7c7c7c]">BP_Ingame_Widget</span>
        <svg viewBox="0 0 12 20" className="h-[20px] w-[12px]"><path d="M2 1.500L9.500 10 2 18.500" fill="none" stroke="#cfcfcf" strokeWidth="2.800" /></svg>
        <span className="ml-[11px] pb-[3px] text-[23px] leading-[30px] tracking-[0.9px] text-[#7c7c7c]">Display Lives (pure)</span>
        <span className="ml-auto mr-[3px] pb-[8px] font-['Roboto_Condensed'] text-[26px] font-bold leading-[30px] tracking-[0.1px] text-[#2f2f2f]">Zoom 1:1</span>
      </div>
      <div className="absolute bottom-[15px] right-[8px] whitespace-nowrap font-['Roboto_Condensed'] text-[80px] font-bold leading-[90px] tracking-[-0.36px] text-white/[0.19]">WIDGET BLUEPRINT</div>
    </div>
  );
}

function GraphTabs() {
  return (
    <div className="flex h-[26px] shrink-0 pl-[5px]">
      <DockTab
        active={false}
        className="w-[187px]"
        icon={
          <svg viewBox="0 0 22 20" className="ml-[7px] mr-[6px] h-[18px] w-[22px]">
            <path d="M8 4h4M15 8v4M10 13h4" stroke="#39415c" strokeWidth="1.500" />
            <path d="M7 2h5.500v5H7zM14.500 1.500H21V8h-6.500zM13.500 11H21v6.500h-7.500z" fill="#a9bdf0" />
            <path d="M1 9.500h9V18H1z" fill="#8ca2e0" />
            <path d="M14.500 1.500H21v2.500h-6.500z" fill="#dfe6fa" />
          </svg>
        }
        label="Event Graph"
        textClass="tracking-[0.44px]"
      />
      <DockTab active={false} className="ml-[2px] w-[187px]" icon={<FnIcon className="ml-[8px] mr-[10px] h-[21px] w-[17px]" />} label="Get Score" textClass="tracking-[0.03px]" />
      <DockTab className="ml-[2px] w-[187px] border-t border-[#b9962f]" icon={<FnIcon className="ml-[8px] mr-[10px] h-[21px] w-[17px]" />} label="Display Lives" textClass="tracking-[0.6px]" />
    </div>
  );
}

function CompilerResults() {
  const row = "flex h-[25px] items-center whitespace-nowrap text-[15px] leading-[25px] text-[#8d8d8d]";
  const dot = "ml-[12px] mr-[15px] h-[5px] w-[5px] rounded-full bg-[#6fb8e8]";
  return (
    <section className="mt-[6px] flex h-[176px] shrink-0 flex-col">
      <DockTab
        className="ml-[5px] h-[27px] w-[188px] shrink-0"
        icon={
          <svg viewBox="0 0 20 22" className="ml-[8px] mr-[7px] h-[21px] w-[20px]">
            <path d="M1 1.500h15l3 3V20H1z" fill="#c3d2f4" />
            <path d="M1 1.500h15l3 3v6L1 16z" fill="#e9effc" opacity="0.8" />
            <path d="M4.500 5.500L10 10.500l-5.500 5" fill="none" stroke="#27335c" strokeWidth="2.400" />
            <path d="M10.500 16.500h7" stroke="#27335c" strokeWidth="2.200" />
          </svg>
        }
        label="Compiler Results"
        textClass="tracking-[0.31px]"
      />
      <div className="flex flex-1 flex-col border-b-2 border-l-[3px] border-t-2 border-[#5f5f5f] bg-[#3e3e3e] pl-[5px] pt-[5px]">
        <div className="h-[96px] rounded-[2px] bg-[#222222] pt-[4px]">
          <div className={`${row} tracking-[0.35px]`}><i className={dot} />Fast Template Successfully Created.</div>
          <div className={`${row} tracking-[0.23px]`}><i className={dot} />[7415.91] Compile of BP_Ingame_Widget successful! [in 120 ms] (/Game/Blueprints/BP_Ingame_Widget.BP_Ingame_Widget)</div>
        </div>
        <span className="mr-[7px] mt-[12px] self-end text-[15px] leading-[20px] tracking-[0.29px] text-[#d6d6d6]">Clear</span>
      </div>
    </section>
  );
}

export default function App() {
  return (
    <div className="flex h-[1030px] w-[1911px] flex-col overflow-hidden bg-[#222222] font-['Roboto',sans-serif]">
      <TitleBar />
      <MenuBar />
      <Toolbar />
      <main className="flex min-h-0 flex-1 pt-[6px]">
        <aside className="ml-px flex w-[338px] shrink-0 flex-col">
          <MyBlueprint />
          <Details />
        </aside>
        <div className="ml-[6px] flex min-w-0 flex-1 flex-col">
          <GraphTabs />
          <div className="flex min-h-0 flex-1 flex-col border-y-[3px] border-l-[3px] border-[#5f5f5f]">
            <Graph />
          </div>
          <CompilerResults />
          <div className="h-[2px] shrink-0" />
        </div>
      </main>
    </div>
  );
}
